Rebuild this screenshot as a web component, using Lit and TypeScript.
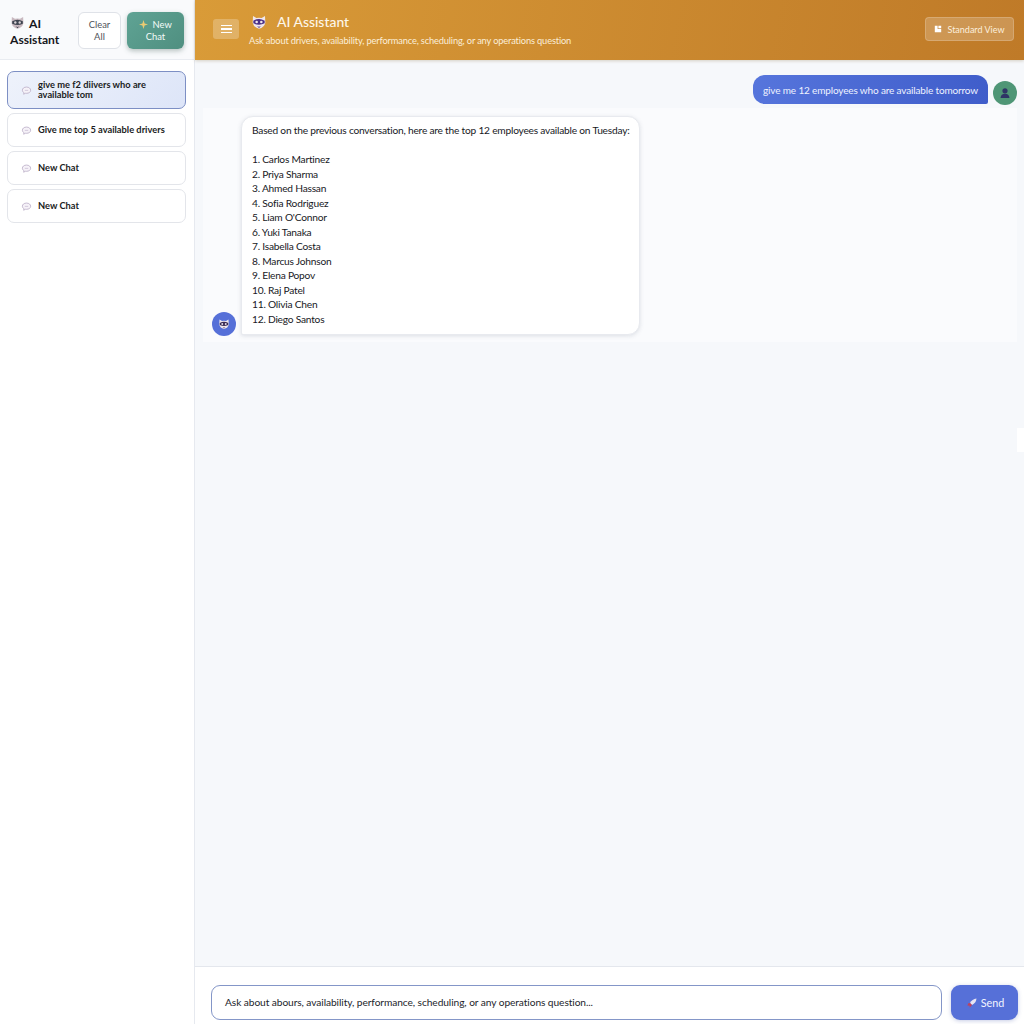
import { LitElement, html, css } from "lit";
import { customElement } from "lit/decorators.js";

const mask = (face: string, band: string, eye: string) => html`<svg viewBox="0 0 24 24" aria-hidden="true">
  <path d="M3 3 L8 6 Q12 5 16 6 L21 3 L21.5 13 Q20 20 12 22 Q4 20 2.5 13 Z" fill=${face}/>
  <path d="M3.5 10 Q12 5 20.5 10 L20.5 14 Q12 18 3.5 14 Z" fill=${band}/>
  <circle cx="8.5" cy="12" r="1.9" fill=${eye}/><circle cx="15.5" cy="12" r="1.9" fill=${eye}/>
  <path d="M9 18 Q12 20 15 18 L12 21 Z" fill=${band}/>
</svg>`;

const bubble = html`<svg class="chat-ic" viewBox="0 0 16 16" aria-hidden="true">
  <path d="M8 3 C4.4 3 2 5 2 7.6 C2 9.2 3 10.5 4.4 11.2 L3.8 13.4 L6.6 12 C7.1 12.1 7.5 12.1 8 12.1 C11.6 12.1 14 10.2 14 7.6 C14 5 11.6 3 8 3 Z" fill="#f6f2f8" stroke="#b5a7c2" stroke-width="1.1"/>
  <path d="M5.5 7.8 H10.5" stroke="#c4b8d0" stroke-width="1"/>
</svg>`;

const names = ["Carlos Martinez", "Priya Sharma", "Ahmed Hassan", "Sofia Rodriguez", "Liam O'Connor", "Yuki Tanaka", "Isabella Costa", "Marcus Johnson", "Elena Popov", "Raj Patel", "Olivia Chen", "Diego Santos"];
const chats = ["give me f2 diivers who are available tom", "Give me top 5 available drivers", "New Chat", "New Chat"];

@customElement("app-root")
export class AppRoot extends LitElement {
  static styles = css`
    :host { display: block; width: 1024px; height: 1024px; overflow: hidden; position: relative; font-family: Lato, "Noto Sans", sans-serif; color: #15171c; }
    * { box-sizing: border-box; }
    .app { display: flex; height: 1024px; }
    .side { width: 195px; flex: none; background: #fff; border-right: 1px solid #e6e9ef; display: flex; flex-direction: column; }
    .side-head { height: 60px; flex: none; padding: 12px 10px 0 10px; display: flex; gap: 6px; align-items: flex-start; background: #f9fafc; border-bottom: 1px solid #e9ecf1; }
    .brand { width: 62px; margin-top: 3px; font-size: 12.1px; line-height: 16px; font-weight: 700; color: #15171c; }
    .brand svg { width: 15px; height: 15px; vertical-align: -2px; margin-right: 4px; }
    .btn { height: 37px; border-radius: 6px; font-size: 9.4px; line-height: 12px; display: flex; align-items: center; justify-content: center; text-align: center; }
    .clear { width: 43px; background: #fff; border: 1px solid #dfe2e8; color: #50535a; }
    .new { width: 57px; background: linear-gradient(135deg, #5fa394, #4f8f80); color: #f3fbf8; box-shadow: 0 2px 5px rgba(60,90,80,.35); }
    .new svg { width: 9px; height: 9px; vertical-align: -1px; margin-right: 2px; }
    .list { display: flex; flex-direction: column; gap: 4px; padding: 11px 8px 0 7px; }
    .chat { height: 34px; border: 1px solid #e3e5ea; border-radius: 7px; background: #fff; display: flex; align-items: center; padding-left: 13px; gap: 6px; font-size: 9.3px; line-height: 10px; font-weight: 700; color: #1a1c22; }
    .chat span { max-width: 128px; }
    .chat.on { height: 38px; background: linear-gradient(135deg, #eef2fb, #dde5f8); border-color: #7d8fc4; }
    .chat-ic { width: 11px; height: 11px; flex: none; }
    .main { flex: 1; min-width: 0; display: flex; flex-direction: column; background: #f6f8fb; }
    .top { height: 60px; flex: none; background: linear-gradient(100deg, #d99b38, #bf7a28); display: flex; align-items: center; padding: 0 10px 0 18px; color: #fff; box-shadow: 0 1px 3px rgba(120,90,40,.25); }
    .menu { width: 26px; height: 20px; background: rgba(255,255,255,.24); border-radius: 3px; display: flex; flex-direction: column; gap: 2px; align-items: center; justify-content: center; margin: -2px 10px 0 0; }
    .menu i { display: block; width: 11px; height: 1.5px; background: #fff; }
    .titles { flex: 1; }
    .title { font-size: 13.9px; line-height: 18px; font-weight: 500; display: flex; align-items: center; gap: 10px; padding-left: 2px; color: #fdf6ea; margin-top: -1px; }
    .title svg { width: 16px; height: 16px; }
    .sub { font-size: 9.3px; letter-spacing: -0.16px; line-height: 12px; margin-top: 4px; color: #fbeed8; }
    .view { width: 89px; height: 24px; background: rgba(255,255,255,.2); border: 1px solid rgba(255,255,255,.18); border-radius: 4px; font-size: 9px; display: flex; align-items: center; justify-content: center; gap: 5px; color: #fcefdc; margin-top: -2px; }
    .view svg { width: 8px; height: 8px; }
    .msgs { flex: 1; min-height: 0; padding: 15px 7px 0 8px; }
    .row-user { display: flex; justify-content: flex-end; gap: 5px; height: 33px; }
    .ubub { height: 29px; width: 235px; background: linear-gradient(100deg, #5675dc, #3f5dca); color: #eef2ff; border-radius: 12px 12px 2px 12px; font-size: 10px; letter-spacing: -0.15px; display: flex; align-items: center; justify-content: center; white-space: nowrap; }
    .uav { width: 24px; height: 24px; border-radius: 50%; background: #4f9676; margin-top: 6px; display: flex; align-items: center; justify-content: center; }
    .uav svg { width: 12px; height: 12px; }
    .row-ai { display: flex; align-items: flex-end; gap: 5px; width: 100%; background: #fafbfd; padding: 8px 9px 6px 9px; height: 234px; }
    .aav { width: 24px; height: 24px; border-radius: 50%; background: #5670d8; display: flex; align-items: center; justify-content: center; flex: none; }
    .aav svg { width: 12px; height: 12px; }
    .abub { width: 399px; height: 219px; margin-bottom: 1px; background: #fff; border: 1px solid #e8eaef; border-radius: 12px 12px 12px 2px; box-shadow: 0 1px 4px rgba(90,100,120,.18); padding: 6px 10px; font-size: 10.2px; letter-spacing: -0.22px; line-height: 14.5px; color: #17191e; white-space: pre; }
    .foot { height: 58px; flex: none; background: #fff; border-top: 1px solid #e4e7ed; padding: 18px 6px 0 16px; display: flex; gap: 9px; }
    .input { flex: 1; height: 35px; border: 1px solid #8496c8; border-radius: 9px; background: #fff; padding: 0 0 1px 13px; display: flex; align-items: center; font-size: 10.2px; letter-spacing: -0.08px; color: #23252b; }
    .send { width: 67px; height: 35px; border-radius: 9px; background: #5670d8; color: #f2f5ff; font-size: 10.8px; display: flex; align-items: center; justify-content: center; gap: 4px; box-shadow: 0 1px 4px rgba(70,90,170,.3); padding-left: 2px; }
    .send svg { width: 10px; height: 10px; }
    .handle { position: absolute; right: 0; top: 428px; width: 7px; height: 24px; background: #fff; }
  `;

  render() {
    return html`
      <div class="app">
        <aside class="side">
          <div class="side-head">
            <div class="brand">${mask("#c9b9c0", "#3f4450", "#d8d2d6")}AI Assistant</div>
            <div class="btn clear">Clear<br />All</div>
            <div class="btn new"><span><svg viewBox="0 0 10 10" aria-hidden="true"><path d="M5 0 L6.2 3.8 L10 5 L6.2 6.2 L5 10 L3.8 6.2 L0 5 L3.8 3.8 Z" fill="#eccb72"/></svg> New<br />Chat</span></div>
          </div>
          <div class="list">
            ${chats.map((c, i) => html`<div class="chat ${i === 0 ? "on" : ""}">${bubble}<span>${c}</span></div>`)}
          </div>
        </aside>
        <main class="main">
          <header class="top">
            <div class="menu"><i></i><i></i><i></i></div>
            <div class="titles">
              <div class="title">${mask("#efe6ec", "#4a2f86", "#efe6ec")}AI Assistant</div>
              <div class="sub">Ask about drivers, availability, performance, scheduling, or any operations question</div>
            </div>
            <div class="view">
              <svg viewBox="0 0 10 10" aria-hidden="true"><path d="M1 1 H4.5 V5 H9 V9 H1 Z M5.5 1 H9 V4 H5.5 Z" fill="#fff"/></svg>
              Standard View
            </div>
          </header>
          <section class="msgs">
            <div class="row-user">
              <div class="ubub">give me 12 employees who are available tomorrow</div>
              <div class="uav"><svg viewBox="0 0 12 12" aria-hidden="true"><circle cx="6" cy="3.8" r="2.6" fill="#2f3566"/><path d="M1.5 11 Q2 6.8 6 6.8 Q10 6.8 10.5 11 Z" fill="#2f3566"/></svg></div>
            </div>
            <div class="row-ai">
              <div class="aav">${mask("#f0e8ee", "#3a2c55", "#e6dfe8")}</div>
              <div class="abub">Based on the previous conversation, here are the top 12 employees available on Tuesday:

${names.map((n, i) => `${i + 1}. ${n}`).join("\n")}</div>
            </div>
          </section>
          <footer class="foot">
            <div class="input">Ask about abours, availability, performance, scheduling, or any operations question...</div>
            <div class="send">
              <svg viewBox="0 0 10 10" aria-hidden="true"><path d="M9.5 .5 Q5 1 3 5 L5 7 Q9 5 9.5 .5 Z" fill="#e8e4f2"/><path d="M3 5 L1 5.6 L.6 8 L2.4 7.2 L2.8 9.4 L5 7 Z" fill="#c2415b"/></svg>
              Send
            </div>
          </footer>
        </main>
      </div>
      <div class="handle"></div>
    `;
  }
}
